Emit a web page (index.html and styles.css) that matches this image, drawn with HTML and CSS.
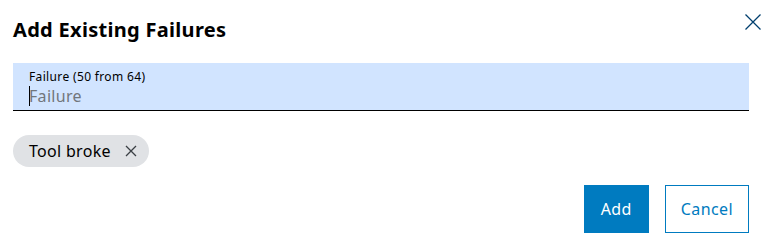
FILE: index.html
```html
<!DOCTYPE html>
<html lang="en">
<head>
<meta charset="utf-8">
<title>Add Existing Failures</title>
<link rel="stylesheet" href="styles.css">
</head>
<body>
<div class="dialog">
  <div class="header">
    <h1 class="title">Add Existing Failures</h1>
    <button class="close" aria-label="Close">
      <svg width="16" height="16" viewBox="0 0 16 16"><path d="M0.5 0.5 L15.5 15.5 M15.5 0.5 L0.5 15.5" stroke="currentColor" stroke-width="1.3" fill="none"/></svg>
    </button>
  </div>
  <div class="field">
    <label class="field-label">Failure (50 from 64)</label>
    <div class="field-input"><span class="caret"></span><span class="placeholder">Failure</span></div>
  </div>
  <div class="chips">
    <span class="chip">Tool broke
      <svg class="chip-x" width="12" height="12" viewBox="0 0 12 12"><path d="M1 1 L11 11 M11 1 L1 11" stroke="currentColor" stroke-width="1.3" fill="none"/></svg>
    </span>
  </div>
  <div class="actions">
    <button class="btn btn-primary">Add</button>
    <button class="btn btn-secondary">Cancel</button>
  </div>
</div>
</body>
</html>
```
FILE: styles.css
```css
html, body {
  margin: 0;
  padding: 0;
  background: #ffffff;
}
body {
  font-family: "Noto Sans", "Open Sans", sans-serif;
  color: #000;
}
.dialog {
  width: 768px;
  height: 250px;
  box-sizing: border-box;
  padding: 14px 19px 0 13px;
  display: flex;
  flex-direction: column;
}
.header {
  display: flex;
  justify-content: space-between;
  align-items: flex-start;
  height: 49px;
}
.title {
  margin: 0;
  font-size: 20px;
  line-height: 32px;
  font-weight: 700;
  letter-spacing: 0.3px;
}
.close {
  border: 0;
  background: none;
  padding: 0;
  margin: 0 -12px 0 0;
  width: 16px;
  height: 16px;
  color: #003f6e;
  display: flex;
}
.field {
  background: #d1e4ff;
  border-bottom: 1px solid #000;
  padding: 6px 16px 0;
  box-sizing: border-box;
  height: 48px;
  display: flex;
  flex-direction: column;
}
.field-label {
  font-size: 12px;
  line-height: 16px;
  color: #000;
  letter-spacing: 0.35px;
}
.field-input {
  display: flex;
  align-items: center;
  height: 22px;
}
.caret {
  width: 1px;
  height: 20px;
  background: #000;
  margin-right: -1px;
}
.placeholder {
  font-size: 16px;
  line-height: 22px;
  color: #71767c;
  letter-spacing: 0.3px;
}
.chips {
  margin-top: 24px;
  display: flex;
}
.chip {
  display: inline-flex;
  align-items: center;
  height: 32px;
  border-radius: 16px;
  background: #e0e2e5;
  padding: 0 12px 0 16px;
  font-size: 16px;
  gap: 14px;
  color: #000;
  letter-spacing: 0.3px;
}
.chip-x {
  color: #3a3f44;
}
.actions {
  margin-top: 18px;
  display: flex;
  justify-content: flex-end;
  gap: 16px;
}
.btn {
  height: 48px;
  font-family: inherit;
  font-size: 16px;
  padding: 0 16px;
  border-radius: 0;
  box-sizing: border-box;
  letter-spacing: 0.4px;
}
.btn-primary {
  background: #007bc0;
  color: #ffffff;
  border: 0;
  padding: 0 17px;
}
.btn-secondary {
  background: #ffffff;
  color: #007bc0;
  border: 1px solid #007bc0;
  padding: 0 15px;
}
```
